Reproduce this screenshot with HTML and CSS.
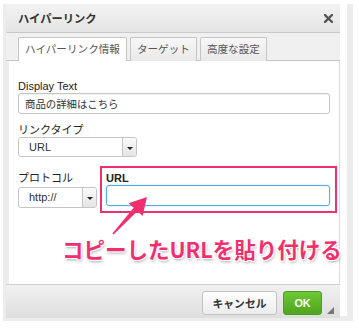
FILE: index.html
```html
<!DOCTYPE html>
<html lang="ja">
<head>
<meta charset="utf-8">
<link rel="stylesheet" href="styles.css">
</head>
<body>
<div class="frame">
  <div class="inner">
    <div class="dialog">
      <div class="head">
        <span class="title">ハイパーリンク</span>
        <svg class="close" width="9" height="9" viewBox="0 0 9 9"><path d="M1 1 L8 8 M8 1 L1 8" stroke="#555" stroke-width="2.3" stroke-linecap="square" fill="none"/></svg>
      </div>
      <div class="tabs">
        <div class="tab active">ハイパーリンク情報</div>
        <div class="tab">ターゲット</div>
        <div class="tab">高度な設定</div>
      </div>
      <div class="panel">
        <div class="label">Display Text</div>
        <div class="input">商品の詳細はこちら</div>
        <div class="label label-gap">リンクタイプ</div>
        <div class="select select-type"><span class="val">URL</span><span class="btn"><span class="caret"></span></span></div>
        <div class="row">
          <div class="col-proto">
            <div class="label">プロトコル</div>
            <div class="select select-proto"><span class="val">http://</span><span class="btn"><span class="caret"></span></span></div>
          </div>
          <div class="urlbox">
            <div class="label bold">URL</div>
            <div class="urlinput"></div>
          </div>
        </div>
        <div class="callout">コピーしたURLを貼り付ける</div>
      </div>
      <div class="foot">
        <button class="btn-cancel">キャンセル</button>
        <button class="btn-ok">OK</button>
        <span class="grip"></span>
      </div>
    </div>
  </div>
</div>
<svg class="arrow" width="359" height="330" viewBox="0 0 359 330">
  <polygon points="112.4,233.6 133.7,207.8 128.6,203.2 147,197 142.6,216 137.3,211.2 113.6,234.4" fill="#f0306e"/>
</svg>
</body>
</html>
```

FILE: styles.css
```css
html, body {
  margin: 0;
  padding: 0;
  background: #fff;
}
body {
  width: 359px;
  height: 330px;
  position: relative;
  overflow: hidden;
  font-family: "Liberation Sans", "Noto Sans CJK JP", sans-serif;
  color: #333;
}
.frame {
  margin: 6px 0 0 3px;
  width: 350px;
  height: 317px;
  box-sizing: border-box;
  background: #ececec;
  padding: 0 6px 5px 3px;
}
.inner {
  background: #fff;
  height: 312px;
}
.dialog {
  width: 334px;
  height: 314px;
  margin-top: -2px;
  display: flex;
  flex-direction: column;
}
.head {
  height: 28px;
  border-bottom: 1px solid #c9c9c9;
  background: linear-gradient(#f3f3f3, #e4e4e4);
  display: flex;
  align-items: center;
  justify-content: space-between;
  padding: 0 7px 0 12px;
}
.title {
  font-family: "Noto Sans CJK JP", sans-serif;
  font-weight: 700;
  font-size: 11.3px;
  color: #333;
}
.close {
  display: block;
  margin-top: 1px;
}
.tabs {
  height: 28px;
  box-sizing: border-box;
  background: #f0f0f0;
  padding: 4px 0 0 12px;
  display: flex;
  gap: 3px;
  border-bottom: 1px solid #c5c5c5;
}
.tab {
  height: 24px;
  box-sizing: border-box;
  border: 1px solid #c5c5c5;
  border-bottom: none;
  border-radius: 2px 2px 0 0;
  background: linear-gradient(#f7f7f7, #e9e9e9);
  font-family: "Noto Sans CJK JP", sans-serif;
  font-size: 10.6px;
  color: #555;
  padding: 0 6px;
  line-height: 22px;
}
.tab.active {
  background: #fff;
  margin-bottom: -1px;
}
.panel {
  flex: 1;
  background: #fff;
  border-left: 3px solid #ececec;
  border-right: 1px solid #dcdcdc;
  padding: 19px 0 0 9px;
  display: flex;
  flex-direction: column;
  align-items: flex-start;
}
.label {
  font-size: 11px;
  line-height: 13px;
  color: #222;
}
.label-gap {
  margin-top: 10px;
}
.label.bold {
  font-weight: 700;
}
.input {
  width: 312px;
  height: 21px;
  box-sizing: border-box;
  border: 1px solid #c5c5c5;
  border-radius: 3px;
  box-shadow: inset 0 1px 1px rgba(0,0,0,0.06);
  font-family: "Noto Sans CJK JP", sans-serif;
  font-size: 10.4px;
  line-height: 19px;
  padding-left: 6px;
  color: #333;
}
.select {
  height: 20px;
  box-sizing: border-box;
  border: 1px solid #c5c5c5;
  border-radius: 3px;
  display: flex;
  align-items: stretch;
  font-size: 11px;
  color: #333;
  overflow: hidden;
}
.select .val {
  flex: 1;
  padding-left: 10px;
  line-height: 18px;
}
.select .btn {
  width: 13px;
  border-left: 1px solid #c5c5c5;
  background: linear-gradient(#fbfbfb, #e4e4e4);
  display: flex;
  align-items: center;
  justify-content: center;
}
.caret {
  width: 0;
  height: 0;
  border-left: 3px solid transparent;
  border-right: 3px solid transparent;
  border-top: 3px solid #222;
  margin-top: 2px;
}
.select-type {
  width: 119px;
}
.select-proto {
  width: 79px;
  height: 21px;
}
.select-proto .val {
  line-height: 19px;
}
.row {
  display: flex;
  align-items: flex-start;
  gap: 3px;
  margin-top: 9px;
}
.col-proto {
  padding-top: 6px;
  display: flex;
  flex-direction: column;
  gap: 2px;
}
.urlbox {
  width: 237px;
  height: 47px;
  box-sizing: border-box;
  border: 2px solid #f0306e;
  padding: 4px 5px 0 4px;
}
.urlinput {
  height: 21px;
  box-sizing: border-box;
  border: 1px solid #56aee8;
  border-radius: 3px;
  box-shadow: 0 0 2px rgba(86,174,232,0.5), inset 0 1px 1px rgba(0,0,0,0.05);
}
.callout {
  margin: 23px 0 0 44px;
  font-family: "Noto Sans CJK JP", sans-serif;
  font-weight: 700;
  font-size: 21.5px;
  line-height: 26px;
  white-space: nowrap;
  color: #f0306e;
  letter-spacing: 0;
  text-shadow: -1px -1px 0 #fff, 1px -1px 0 #fff, -1px 1px 0 #fff, 1px 1px 0 #fff, 1px 2px 3px rgba(0,0,0,0.35);
}
.foot {
  height: 34px;
  box-sizing: border-box;
  border-top: 1px solid #cfcfcf;
  background: linear-gradient(#f1f1f1, #dedede);
  display: flex;
  align-items: flex-start;
  justify-content: flex-end;
  padding: 6px 6px 0 0;
}
.foot button {
  height: 24px;
  box-sizing: border-box;
  border-radius: 3px;
  font-family: "Noto Sans CJK JP", sans-serif;
  font-weight: 700;
  font-size: 10.8px;
  padding: 0;
  margin: 0;
}
.btn-cancel {
  width: 75px;
  border: 1px solid #c2c2c2;
  background: linear-gradient(#ffffff, #ececec);
  color: #333;
}
.foot .btn-ok {
  width: 39px;
  margin-left: 6px;
  border: 1px solid #4f9e1f;
  background: linear-gradient(#6cc935, #4fa51d);
  color: #fff;
  font-family: "Liberation Sans", sans-serif;
}
.grip {
  width: 0;
  height: 0;
  margin: 16px 0 0 5px;
  border-left: 7px solid transparent;
  border-bottom: 7px solid #777;
}
.arrow {
  position: absolute;
  left: 0;
  top: 0;
  pointer-events: none;
}
```
